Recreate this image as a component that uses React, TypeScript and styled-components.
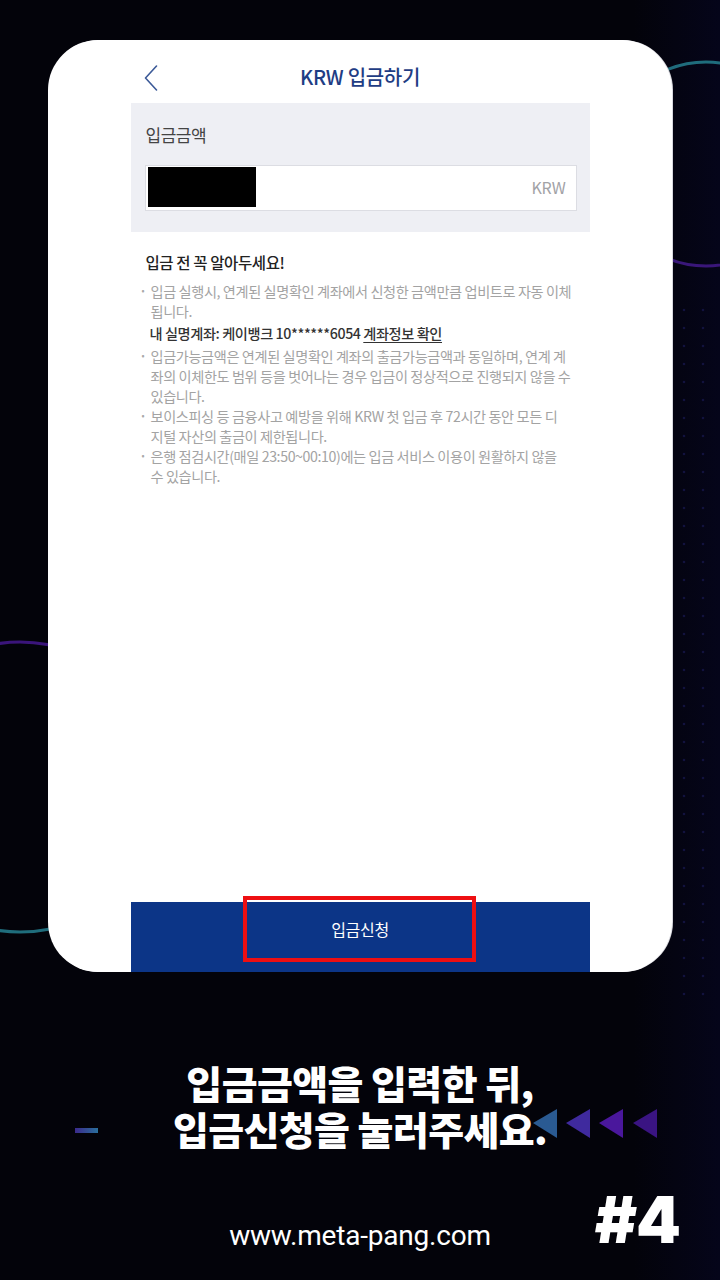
import React from "react";
import styled, { createGlobalStyle } from "styled-components";

const Global = createGlobalStyle`
  html, body { margin: 0; padding: 0; background: #03030a; }
  body { font-family: "Noto Sans CJK KR", "Noto Sans", sans-serif; }
  * { box-sizing: border-box; }
`;

const Page = styled.div`
  position: relative;
  width: 720px;
  height: 1280px;
  overflow: hidden;
  background: linear-gradient(90deg, #03030a 0%, #03030a 88%, #05051a 100%);
  display: flex;
  flex-direction: column;
  align-items: center;
`;

const Backdrop = styled.svg`
  position: absolute;
  left: 0;
  top: 0;
  width: 720px;
  height: 1280px;
  z-index: 0;
`;

const Card = styled.div`
  position: relative;
  z-index: 1;
  margin-top: 40px;
  width: 624px;
  height: 932px;
  background: #ffffff;
  border-radius: 50px;
  overflow: hidden;
  display: flex;
  flex-direction: column;
  align-items: center;
  box-shadow: 1px 0 0 #d8d8de;
`;

const Screen = styled.div`
  width: 459px;
  flex: 1;
  display: flex;
  flex-direction: column;
`;

const Header = styled.div`
  position: relative;
  height: 63px;
  padding-top: 23px;
  display: flex;
  justify-content: center;
`;

const BackButton = styled.svg`
  position: absolute;
  left: 13px;
  top: 25px;
`;

const Title = styled.div`
  font-size: 20px;
  line-height: 28px;
  font-weight: 500;
  color: #1f3d84;
  letter-spacing: -0.3px;
`;

const AmountPanel = styled.div`
  background: #eeeff4;
  padding: 20px 13px 21px 14px;
  display: flex;
  flex-direction: column;
`;

const PanelLabel = styled.div`
  font-size: 17px;
  line-height: 24px;
  color: #444;
  padding-left: 1px;
  letter-spacing: -0.5px;
`;

const AmountInput = styled.div`
  margin-top: 18px;
  height: 46px;
  background: #fff;
  border: 1px solid #dcdde3;
  display: flex;
  align-items: center;
  justify-content: space-between;
  padding: 1px 10px 3px 2px;
`;

const Redaction = styled.div`
  width: 108px;
  height: 40px;
  background: #000;
`;

const Currency = styled.span`
  font-size: 16px;
  color: #a2a2a6;
  letter-spacing: -0.2px;
`;

const Notice = styled.div`
  padding: 20px 0 0 11px;
  display: flex;
  flex-direction: column;
`;

const NoticeTitle = styled.div`
  font-size: 15.5px;
  line-height: 20px;
  font-weight: 500;
  color: #222;
  padding-left: 4px;
  letter-spacing: -0.4px;
  margin-bottom: 9px;
`;

const Bullet = styled.div`
  display: flex;
`;

const Dot = styled.span`
  width: 9px;
  flex: none;
  font-size: 9px;
  line-height: 20px;
  color: #a8a8a8;
`;

const Lines = styled.div`
  display: flex;
  flex-direction: column;
`;

const Line = styled.span<{ $strong?: boolean }>`
  white-space: nowrap;
  font-size: 14.2px;
  line-height: 20px;
  letter-spacing: -0.4px;
  color: ${(p) => (p.$strong ? "#333" : "#a3a3a3")};
  font-weight: ${(p) => (p.$strong ? 500 : 400)};
  margin: ${(p) => (p.$strong ? "2px 0 3px 8px" : "0")};
`;

const Link = styled.span`
  text-decoration: underline;
  text-underline-offset: 3px;
`;

const SubmitBar = styled.div`
  position: relative;
  margin-top: auto;
  height: 70px;
  background: #0c3587;
  display: flex;
  justify-content: center;
  padding-top: 15px;
`;

const SubmitText = styled.span`
  font-size: 16px;
  line-height: 24px;
  color: #fff;
  letter-spacing: -0.3px;
`;

const Highlight = styled.div`
  position: absolute;
  left: 112px;
  top: -6px;
  width: 233px;
  height: 66px;
  border: 4px solid #ee0f12;
`;

const Caption = styled.div`
  position: relative;
  z-index: 1;
  margin-top: 88px;
  width: 720px;
  display: flex;
  flex-direction: column;
  align-items: center;
  gap: 2px;
`;

const CaptionLine = styled.div`
  font-size: 39px;
  line-height: 44px;
  height: 44px;
  font-weight: 800;
  color: #fff;
  letter-spacing: -0.6px;
  white-space: nowrap;
`;

const Dash = styled.div`
  position: absolute;
  left: 75px;
  top: 68px;
  width: 23px;
  height: 5px;
  background: linear-gradient(90deg, #3b2a8c, #2a6f9c);
`;

const Arrows = styled.svg`
  position: absolute;
  left: 532px;
  top: 48px;
`;

const Footer = styled.div`
  position: relative;
  z-index: 1;
  margin-top: 38px;
  width: 720px;
  display: grid;
  grid-template-columns: 1fr auto 1fr;
`;

const Url = styled.div`
  grid-column: 2;
  align-self: end;
  font-family: Roboto, "Liberation Sans", sans-serif;
  font-size: 28px;
  line-height: 32px;
  color: #fff;
  letter-spacing: -0.2px;
`;

const Tag = styled.div`
  grid-column: 3;
  justify-self: end;
  margin-right: 40px;
  font-family: Inter, "Liberation Sans", sans-serif;
  font-size: 64px;
  line-height: 64px;
  font-weight: 900;
  color: #fff;
  letter-spacing: -1px;
`;

const dots: { x: number; y: number }[] = [];
for (let y = 310; y < 1010; y += 18) {
  dots.push({ x: 684, y });
  dots.push({ x: 703, y });
}

export default function App() {
  return (
    <Page>
      <Global />
      <Backdrop viewBox="0 0 720 1280">
        <defs>
          <linearGradient id="ringA" x1="0" y1="0" x2="0" y2="1">
            <stop offset="0" stopColor="#1f6d7c" />
            <stop offset="1" stopColor="#3a167a" />
          </linearGradient>
          <linearGradient id="ringB" x1="0" y1="0" x2="0" y2="1">
            <stop offset="0" stopColor="#3a147a" />
            <stop offset="1" stopColor="#1f6d7c" />
          </linearGradient>
        </defs>
        <circle cx="706" cy="164" r="102" fill="none" stroke="url(#ringA)" strokeWidth="3" />
        <circle cx="20" cy="787" r="145" fill="none" stroke="url(#ringB)" strokeWidth="3" />
        {dots.map((d, i) => (
          <circle key={i} cx={d.x} cy={d.y} r="1.3" fill="#12123e" />
        ))}
      </Backdrop>
      <Card>
        <Screen>
          <Header>
            <BackButton width="14" height="26" viewBox="0 0 14 26">
              <path d="M12.5 1 L1.5 13 L12.5 25" fill="none" stroke="#3c5a98" strokeWidth="1.6" strokeLinecap="round" strokeLinejoin="round" />
            </BackButton>
            <Title>KRW 입금하기</Title>
          </Header>
          <AmountPanel>
            <PanelLabel>입금금액</PanelLabel>
            <AmountInput>
              <Redaction />
              <Currency>KRW</Currency>
            </AmountInput>
          </AmountPanel>
          <Notice>
            <NoticeTitle>입금 전 꼭 알아두세요!</NoticeTitle>
            <Bullet>
              <Dot>•</Dot>
              <Lines>
                <Line>입금 실행시, 연계된 실명확인 계좌에서 신청한 금액만큼 업비트로 자동 이체</Line>
                <Line>됩니다.</Line>
              </Lines>
            </Bullet>
            <Line $strong>
              내 실명계좌: 케이뱅크 10******6054 <Link>계좌정보 확인</Link>
            </Line>
            <Bullet>
              <Dot>•</Dot>
              <Lines>
                <Line>입금가능금액은 연계된 실명확인 계좌의 출금가능금액과 동일하며, 연계 계</Line>
                <Line>좌의 이체한도 범위 등을 벗어나는 경우 입금이 정상적으로 진행되지 않을 수</Line>
                <Line>있습니다.</Line>
              </Lines>
            </Bullet>
            <Bullet>
              <Dot>•</Dot>
              <Lines>
                <Line>보이스피싱 등 금융사고 예방을 위해 KRW 첫 입금 후 72시간 동안 모든 디</Line>
                <Line>지털 자산의 출금이 제한됩니다.</Line>
              </Lines>
            </Bullet>
            <Bullet>
              <Dot>•</Dot>
              <Lines>
                <Line>은행 점검시간(매일 23:50~00:10)에는 입금 서비스 이용이 원활하지 않을</Line>
                <Line>수 있습니다.</Line>
              </Lines>
            </Bullet>
          </Notice>
          <SubmitBar>
            <SubmitText>입금신청</SubmitText>
            <Highlight />
          </SubmitBar>
        </Screen>
      </Card>
      <Caption>
        <CaptionLine>입금금액을 입력한 뒤,</CaptionLine>
        <CaptionLine>입금신청을 눌러주세요.</CaptionLine>
        <Dash />
        <Arrows width="128" height="32" viewBox="0 0 128 32">
          <polygon points="25,1 1,15 25,30" fill="#2a5a92" />
          <polygon points="58,1 34,15 58,30" fill="#3f2a9e" />
          <polygon points="91,1 67,15 91,30" fill="#4a179c" />
          <polygon points="125,1 101,15 125,30" fill="#3a1482" />
        </Arrows>
      </Caption>
      <Footer>
        <Url>www.meta-pang.com</Url>
        <Tag>#4</Tag>
      </Footer>
    </Page>
  );
}
